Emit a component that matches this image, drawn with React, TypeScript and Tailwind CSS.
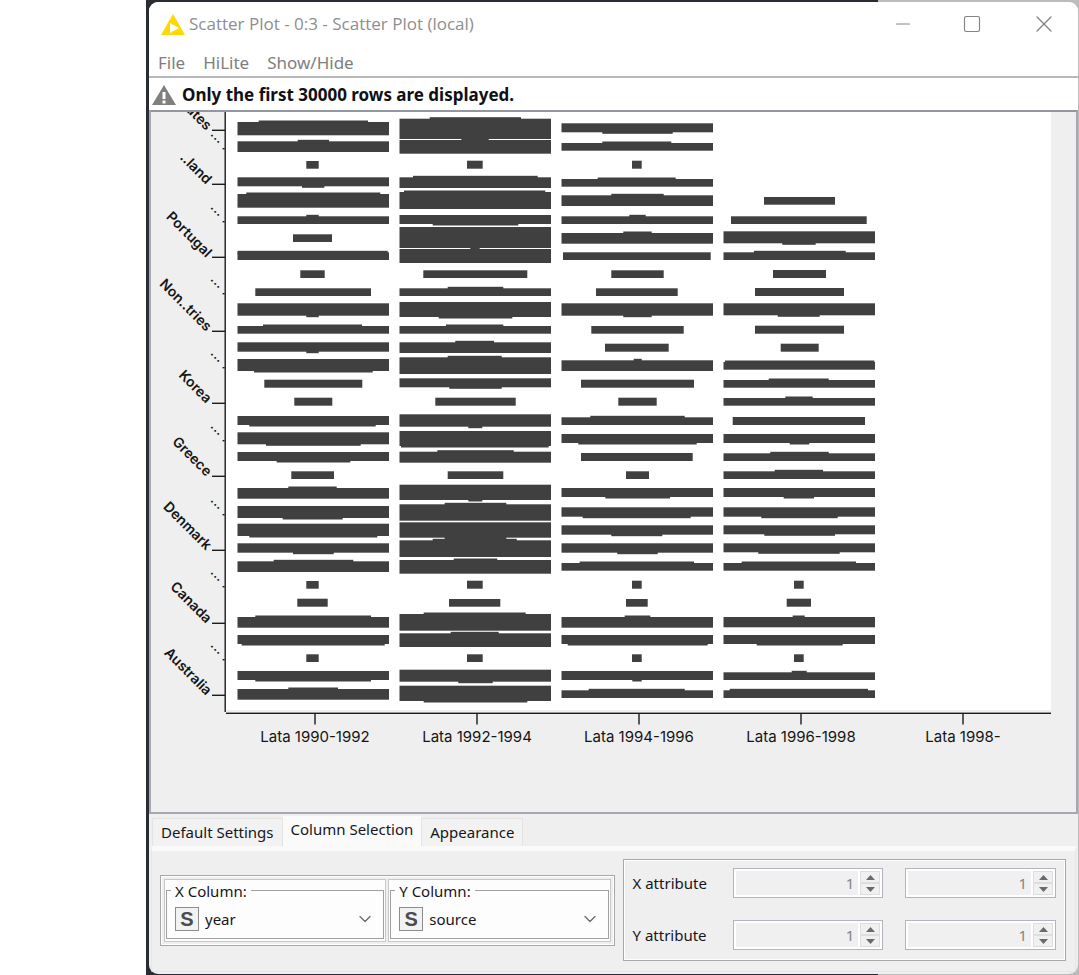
import { ChevronDown, Minus, Square, X } from "lucide-react";

/** top, bottom, left, right, kind: "t"/"b" = full-width body with a narrower strip above/below, "n" = narrow bar */
type Row = [number, number, number, number, "t" | "b" | "n"];

const FULL = 151.5;

const SERIES: { x: number; rows: Row[] }[] = [
  {
    x: 237.5,
    rows: [
      [122, 135.3, 258.7, 368, "t"],
      [141.3, 152, 297.7, 329, "t"],
      [161, 168.7, 306.3, 318.7, "n"],
      [177.3, 186.3, 302, 324.3, "b"],
      [194, 207.7, 246.3, 380.3, "t"],
      [216.3, 224, 306.3, 318.7, "t"],
      [234.3, 242, 293, 332, "n"],
      [252.3, 260, 237.5, 387.7, "t"],
      [270.3, 278, 300.3, 324.7, "n"],
      [288.3, 296, 255.3, 371, "n"],
      [303.3, 315.7, 306.3, 318.7, "b"],
      [326, 333.7, 263, 362, "t"],
      [342.3, 351.7, 306.3, 318.7, "b"],
      [359, 371, 254, 372.7, "b"],
      [379.7, 387.7, 264.3, 362.3, "n"],
      [397.7, 405.7, 294.3, 332.3, "n"],
      [416, 425, 249.3, 375.7, "b"],
      [432.3, 444.3, 266, 360.7, "b"],
      [452, 461, 276.7, 350.3, "b"],
      [471.3, 479, 291.3, 334, "n"],
      [488, 498.7, 288.3, 336.7, "t"],
      [506, 518, 282.7, 342.7, "b"],
      [523.7, 536, 249.3, 377.3, "b"],
      [543.3, 552.7, 293, 333.7, "b"],
      [561.3, 572, 273.7, 353.3, "t"],
      [581, 588.7, 306.3, 318.7, "n"],
      [598.7, 606.7, 297.3, 327.7, "n"],
      [617, 627.7, 255.3, 371, "t"],
      [635, 644, 241.7, 384.7, "b"],
      [654.3, 662, 306.3, 318.7, "n"],
      [671, 680, 255.3, 371, "b"],
      [689, 699.7, 288.3, 338, "t"],
    ],
  },
  {
    x: 399.5,
    rows: [
      [118.7, 139, 429.7, 521, "t"],
      [140, 153.7, 461.3, 488.7, "t"],
      [160.7, 168.7, 467, 482.7, "n"],
      [177.3, 188, 413, 537.7, "t"],
      [192, 209, 404, 545.3, "t"],
      [215, 224, 432.7, 518.3, "b"],
      [227, 248, 399.5, 551, "n"],
      [249, 263, 470.3, 479.7, "t"],
      [270.3, 278, 423.3, 527.3, "n"],
      [288.3, 296, 447.7, 503.3, "t"],
      [302, 317, 438.7, 512.3, "b"],
      [326, 333.7, 446, 503.3, "t"],
      [342.3, 353, 455.3, 494, "t"],
      [357.3, 374, 447.7, 501.7, "t"],
      [378.3, 387.3, 449.3, 501.7, "b"],
      [397.7, 405.7, 435.3, 515.7, "n"],
      [414.3, 426.7, 468.3, 482.3, "b"],
      [431, 446, 401, 548.7, "b"],
      [451.7, 462.7, 437.3, 513.7, "t"],
      [471.3, 479, 447.7, 503.3, "n"],
      [484.7, 500, 468.3, 482.3, "b"],
      [504.3, 520.7, 444.7, 506.3, "t"],
      [522.3, 537.7, 444.7, 506.3, "b"],
      [540.3, 557, 432.7, 516.7, "t"],
      [560, 573.7, 453.7, 497.3, "t"],
      [580.7, 588.7, 467, 482.7, "n"],
      [599, 606.7, 449, 500.3, "n"],
      [614, 630.7, 423.7, 525.7, "t"],
      [633.3, 647, 450.7, 498.7, "t"],
      [654.3, 662, 467, 482.7, "n"],
      [669.7, 681.7, 458.3, 492.7, "b"],
      [685.7, 701, 423.7, 527.3, "b"],
    ],
  },
  {
    x: 561.5,
    rows: [
      [123.3, 132.3, 602.3, 672.7, "b"],
      [143, 150.7, 602.3, 671.3, "t"],
      [160.7, 168.7, 632, 641.7, "n"],
      [179, 186.7, 597.7, 675.7, "t"],
      [195.3, 206, 611.3, 663.7, "t"],
      [216.3, 224, 629.3, 645.7, "t"],
      [233, 243.7, 623.3, 651.7, "t"],
      [252.3, 260, 563, 710.7, "n"],
      [270.3, 278, 611.3, 663.7, "n"],
      [288.3, 296, 596, 677.7, "n"],
      [303.3, 315.7, 623.3, 651.7, "b"],
      [326, 333.7, 591.3, 683.7, "n"],
      [343.7, 351.7, 605, 668.7, "n"],
      [360.3, 371, 633.7, 641.7, "t"],
      [379.7, 387.7, 581, 694, "n"],
      [397.7, 405.7, 618.3, 656.7, "n"],
      [417.3, 425, 590.3, 684.7, "t"],
      [434, 443, 578.3, 696.7, "b"],
      [453, 461, 581, 692.7, "n"],
      [471.3, 479, 626, 649, "n"],
      [488, 497, 605.3, 670, "b"],
      [507.3, 516.7, 582.7, 690.7, "b"],
      [525.3, 534.7, 611.3, 662.3, "b"],
      [543.3, 552.7, 617.3, 657.7, "b"],
      [563, 570.7, 579.7, 694, "t"],
      [580.7, 588.7, 632, 641.7, "n"],
      [599, 606.7, 626, 647.7, "n"],
      [617, 627.7, 624.7, 650.3, "t"],
      [635, 644, 567.7, 707.7, "b"],
      [654.3, 662, 632, 641.7, "n"],
      [671, 680, 632.3, 641.7, "b"],
      [690.3, 698, 588.7, 684.7, "t"],
    ],
  },
  {
    x: 723.5,
    rows: [
      [197, 204.7, 764, 835, "n"],
      [216.3, 224, 731, 866.7, "n"],
      [231.3, 243.3, 782.3, 815.7, "b"],
      [252.3, 260, 754, 845.7, "t"],
      [270, 278, 773, 826, "n"],
      [288, 296, 755, 844, "n"],
      [303.3, 315.3, 777.7, 819.7, "b"],
      [325.7, 333.7, 755, 844, "n"],
      [343.7, 351.7, 780.7, 818.7, "n"],
      [362, 369.7, 725, 874.3, "t"],
      [380, 387.7, 768.7, 828.7, "t"],
      [398, 405.7, 785.3, 812.7, "t"],
      [417, 425, 732.7, 865, "n"],
      [434, 443, 789.7, 809.3, "b"],
      [453.3, 461, 770.3, 828.7, "t"],
      [471.3, 479, 774.7, 823, "t"],
      [488, 497, 783.7, 814, "b"],
      [507.3, 516.7, 761.3, 837.7, "b"],
      [525.3, 534.3, 764.3, 835, "b"],
      [543.3, 552.3, 758.3, 839.7, "b"],
      [563, 570.7, 741.7, 856, "t"],
      [580.7, 588.7, 794, 803.7, "n"],
      [598.7, 606.7, 786.7, 811, "n"],
      [617, 627.3, 792.7, 804.7, "t"],
      [635, 644, 756.7, 842.7, "b"],
      [654.3, 662, 794, 803.7, "n"],
      [672.3, 680, 791.7, 806.7, "t"],
      [690.3, 698, 729.7, 868, "t"],
    ],
  },
];

const Y_LABELS: [string, number][] = [
  ["ates", 130],
  ["..land", 184],
  ["Portugal", 257],
  ["Non..tries", 331],
  ["Korea", 403],
  ["Greece", 476],
  ["Denmark", 550],
  ["Canada", 623],
  ["Australia", 695],
];

const Y_MINOR = [148, 221, 293, 367, 440, 514, 586, 659];

const X_LABELS: [string, number][] = [
  ["Lata 1990-1992", 315],
  ["Lata 1992-1994", 477],
  ["Lata 1994-1996", 639],
  ["Lata 1996-1998", 801],
  ["Lata 1998-", 963],
];

/** The strip sticks out of the body by 1.5 and overlaps it by 2 so that no seam shows. */
function Bar({ x, row: [top, bottom, left, right, kind] }: { x: number; row: Row }) {
  if (kind === "n") {
    return <rect x={left} y={top} width={right - left} height={bottom - top} />;
  }
  return (
    <>
      <rect x={x} y={top} width={FULL} height={bottom - top} />
      <rect x={left} y={kind === "t" ? top - 1.5 : bottom - 2} width={right - left} height={3.5} />
    </>
  );
}

function Chart() {
  return (
    <svg
      viewBox="151 112 925 700"
      preserveAspectRatio="xMinYMin meet"
      className="block w-full"
      role="img"
      aria-label="Scatter plot of source by year"
    >
      <rect x="226" y="112" width="825" height="598" fill="#ffffff" />
      {SERIES.map(({ x, rows }) => (
        <g key={x} fill="#404040">
          {rows.map((row) => (
            <Bar key={row[0]} x={x} row={row} />
          ))}
        </g>
      ))}
      <g fill="#1c1c1c">
        <rect x="224.500" y="112" width="1.4" height="600" />
        <rect x="226" y="712.600" width="825" height="1.4" />
        {X_LABELS.map(([label, x]) => (
          <rect key={label} x={x - 0.7} y="714" width="1.4" height="10.5" />
        ))}
        {Y_LABELS.map(([label, y]) => (
          <rect key={label} x="212" y={y - 0.4} width="13" height="1.4" />
        ))}
        {Y_MINOR.map((y) => (
          <rect key={y} x="222.600" y={y} width="2" height="1.4" />
        ))}
      </g>
      <g fill="#151515" fontFamily="'Inter', sans-serif" fontSize="15">
        {X_LABELS.map(([label, x]) => (
          <text key={label} x={x} y="742" textAnchor="middle">
            {label}
          </text>
        ))}
        {Y_LABELS.map(([label, y]) => (
          <text
            key={label}
            fontWeight="600"
            fontSize="14"
            textAnchor="end"
            transform={`translate(206 ${y + 1}) rotate(45)`}
          >
            {label}
          </text>
        ))}
        {Y_MINOR.map((y) => (
          <text key={y} textAnchor="end" transform={`translate(219 ${y - 4}) rotate(45)`}>
            ...
          </text>
        ))}
      </g>
    </svg>
  );
}

function ColumnSelect({ label, value }: { label: string; value: string }) {
  const id = value + "-select";
  return (
    <div className="flex-1 border border-[#c8c8c8] bg-[#fdfdfd] p-px pb-0.5">
      <fieldset className="border border-[#a0a0a0] px-2 pb-[7px]">
        <legend className="-ml-1 px-1 leading-5">
          <label htmlFor={id}>{label}</label>
        </legend>
        <div className="relative mt-1.5 flex h-6 items-center">
          <span className="flex size-6 items-center justify-center border border-[#8c8c8c] bg-[#f2f2f2] font-['Liberation_Sans',sans-serif] text-xl leading-none font-bold text-[#4c4c4c]">
            S
          </span>
          <select
            id={id}
            className="h-6 min-w-0 flex-1 appearance-none bg-transparent pl-1.5 leading-6 outline-none"
            defaultValue={value}
          >
            <option value={value}>{value}</option>
          </select>
          <ChevronDown
            className="pointer-events-none absolute right-0 size-5 text-[#6c6c6c]"
            strokeWidth={1.6}
          />
        </div>
      </fieldset>
    </div>
  );
}

function SpinButton({ label, down }: { label: string; down?: boolean }) {
  return (
    <button
      type="button"
      aria-label={label}
      disabled
      className="flex h-3 w-5 items-center justify-center border border-[#dedede] bg-[#f0f0f0]"
    >
      <svg viewBox="0 0 9 5" className="h-[5px] w-[9px]" fill="#6a6a6a">
        <path d={down ? "M0 0h9L4.500 5z" : "M0 5h9L4.500 0z"} />
      </svg>
    </button>
  );
}

function Spinner({ label }: { label: string }) {
  return (
    <div className="flex h-[30px] min-w-0 flex-1 items-center border border-[#b4b4bc] bg-white p-0.5">
      <input
        aria-label={label}
        type="text"
        defaultValue="1"
        disabled
        className="h-full min-w-0 flex-1 bg-[#f0f0f0] pr-1 text-right text-[#848484]"
      />
      <div className="ml-0.5 flex flex-col">
        <SpinButton label={label + " up"} />
        <SpinButton label={label + " down"} down />
      </div>
    </div>
  );
}

function AttributeRow({ name }: { name: string }) {
  return (
    <div className="flex items-center">
      <span className="w-[100px] shrink-0">{name}</span>
      <div className="flex min-w-0 flex-1 gap-[22px]">
        <Spinner label={name + " minimum"} />
        <Spinner label={name + " maximum"} />
      </div>
    </div>
  );
}

export default function App() {
  return (
    <div className="flex min-h-screen bg-white font-['Noto_Sans','Open_Sans',sans-serif] text-[15px] text-[#16161c]">
      <div className="w-[146px] shrink-0" />
      <div className="flex min-w-0 flex-1 bg-[linear-gradient(90deg,#2a2c34_732px,#bcbcbc_732px)] pt-0.5 pr-px pb-px pl-[3px]">
        <main className="flex min-w-0 flex-1 flex-col overflow-hidden rounded-[9px] bg-[#efefef]">
          <header className="flex h-11 items-center bg-white pr-5 pl-3">
            <svg viewBox="0 0 24 21" className="h-[21px] w-6">
              <path d="M12 0L24 21H0z" fill="#ffd800" />
              <path d="M9 9v10l9-5z" fill="#fff" />
            </svg>
            <h1 className="ml-1 flex-1 font-['Open_Sans',sans-serif] text-[17px] font-normal text-[#8e8e8e]">
              Scatter Plot - 0:3 - Scatter Plot (local)
            </h1>
            <div className="flex items-center gap-12 text-[#858585]">
              <button type="button" aria-label="Minimize">
                <Minus className="size-[22px]" strokeWidth={1.2} />
              </button>
              <button type="button" aria-label="Maximize">
                <Square className="size-5" strokeWidth={1.4} />
              </button>
              <button type="button" aria-label="Close">
                <X className="size-7" strokeWidth={1.2} />
              </button>
            </div>
          </header>
          <nav className="flex h-8 items-center gap-[18px] border-b-2 border-[#b8b8b8] bg-white px-[9px] pt-1 text-[17px] text-[#7e7e7e]">
            <button type="button">File</button>
            <button type="button">HiLite</button>
            <button type="button">Show/Hide</button>
          </nav>
          <div className="flex h-8 items-center gap-1.5 bg-white px-[3px] pt-0.5">
            <svg viewBox="0 0 24 22" className="h-[22px] w-6">
              <path d="M12 1L24 21H0z" fill="#808080" />
              <path d="M10.500 8h3v7h-3zM10.500 16.500h3v3h-3z" fill="#fff" />
            </svg>
            <strong className="text-[17px] leading-6 text-[#101014]">
              Only the first 30000 rows are displayed.
            </strong>
          </div>
          <section className="border-2 border-[#a4a8b0] border-t-[#9397a2]">
            <Chart />
          </section>
          <div role="tablist" className="flex h-8 items-end px-[3px]">
            <button
              type="button"
              role="tab"
              className="h-7 border border-b-0 border-[#e4e4e4] bg-[#f2f2f2] px-2"
            >
              Default Settings
            </button>
            <button type="button" role="tab" aria-selected="true" className="h-[30px] bg-[#fafafa] px-2 pb-1">
              Column Selection
            </button>
            <button
              type="button"
              role="tab"
              className="h-7 border border-b-0 border-[#e4e4e4] bg-[#f2f2f2] px-2"
            >
              Appearance
            </button>
          </div>
          <section className="mx-0.5 mb-0.5 grid flex-1 grid-cols-[454fr_443fr] items-center gap-2 border border-t-[5px] border-[#e6e6e6] border-t-[#fafafa] pr-[9px] pb-0.5 pl-2">
            <div className="flex min-w-0 gap-0.5 border border-[#a8a8a8] p-[3px] ring-1 ring-white ring-inset">
              <ColumnSelect label="X Column:" value="year" />
              <ColumnSelect label="Y Column:" value="source" />
            </div>
            <div className="flex min-w-0 flex-col gap-[22px] border border-[#a8a8a8] px-[9px] pt-2 pb-2.5 ring-1 ring-white ring-inset">
              <AttributeRow name="X attribute" />
              <AttributeRow name="Y attribute" />
            </div>
          </section>
        </main>
      </div>
    </div>
  );
}
